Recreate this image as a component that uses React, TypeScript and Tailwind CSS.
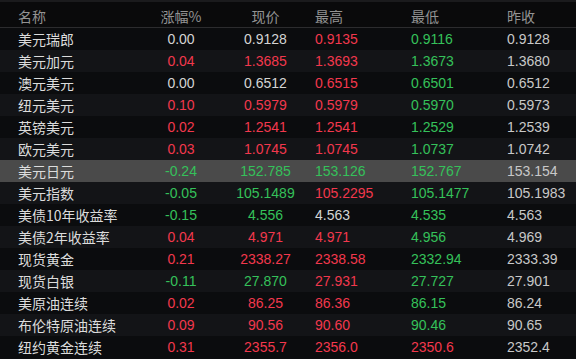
const R = "text-[#f2384d]";
const G = "text-[#35c15a]";
const W = "text-[#d4d4d4]";

type Row = {
  name: string;
  cells: [string, string][];
  last: string;
};

const rows: Row[] = [
  { name: "美元瑞郎", cells: [["0.00", W], ["0.9128", W], ["0.9135", R], ["0.9116", G]], last: "0.9128" },
  { name: "美元加元", cells: [["0.04", R], ["1.3685", R], ["1.3693", R], ["1.3673", G]], last: "1.3680" },
  { name: "澳元美元", cells: [["0.00", W], ["0.6512", W], ["0.6515", R], ["0.6501", G]], last: "0.6512" },
  { name: "纽元美元", cells: [["0.10", R], ["0.5979", R], ["0.5979", R], ["0.5970", G]], last: "0.5973" },
  { name: "英镑美元", cells: [["0.02", R], ["1.2541", R], ["1.2541", R], ["1.2529", G]], last: "1.2539" },
  { name: "欧元美元", cells: [["0.03", R], ["1.0745", R], ["1.0745", R], ["1.0737", G]], last: "1.0742" },
  { name: "美元日元", cells: [["-0.24", G], ["152.785", G], ["153.126", G], ["152.767", G]], last: "153.154" },
  { name: "美元指数", cells: [["-0.05", G], ["105.1489", G], ["105.2295", R], ["105.1477", G]], last: "105.1983" },
  { name: "美债10年收益率", cells: [["-0.15", G], ["4.556", G], ["4.563", W], ["4.535", G]], last: "4.563" },
  { name: "美债2年收益率", cells: [["0.04", R], ["4.971", R], ["4.971", R], ["4.956", G]], last: "4.969" },
  { name: "现货黄金", cells: [["0.21", R], ["2338.27", R], ["2338.58", R], ["2332.94", G]], last: "2333.39" },
  { name: "现货白银", cells: [["-0.11", G], ["27.870", G], ["27.931", R], ["27.727", G]], last: "27.901" },
  { name: "美原油连续", cells: [["0.02", R], ["86.25", R], ["86.36", R], ["86.15", G]], last: "86.24" },
  { name: "布伦特原油连续", cells: [["0.09", R], ["90.56", R], ["90.60", R], ["90.46", G]], last: "90.65" },
  { name: "纽约黄金连续", cells: [["0.31", R], ["2355.7", R], ["2356.0", R], ["2350.6", R]], last: "2352.4" },
];

const grid = "grid grid-cols-[146px_70px_99px_96px_96px_1fr] items-center";
const cjk = "font-['Noto_Sans_CJK_SC',sans-serif]";
const num = "font-['Liberation_Sans','Noto_Sans_CJK_SC',sans-serif]";

export default function App() {
  return (
    <div className="w-[576px] h-[359px] overflow-hidden bg-[#0c0d0f] text-[14px] leading-none">
      <div className="h-[2px] bg-[#1b1b1d]" />
      <div className={`${grid} h-[26px] pt-[2px] bg-[#0a0a0b] border-b border-[#2c2c2e] text-[#939393] ${cjk}`}>
        <span className="pl-[18px]">名称</span>
        <span className="text-center">涨幅%</span>
        <span className="text-center">现价</span>
        <span>最高</span>
        <span>最低</span>
        <span>昨收</span>
      </div>
      {rows.map((r, i) => {
        const hl = i === 6;
        const bg = hl ? "bg-[#4a4a4a]" : i % 2 === 0 ? "bg-[#0b0c0e]" : "bg-[#131417]";
        return (
          <div key={r.name} className={`${grid} h-[22px] ${bg}`}>
            <span className={`pl-[18px] text-[#dcdcdc] ${cjk}`}>{r.name}</span>
            <span className={`text-center ${num} ${r.cells[0][1]}`}>{r.cells[0][0]}</span>
            <span className={`text-center ${num} ${r.cells[1][1]}`}>{r.cells[1][0]}</span>
            <span className={`${num} ${r.cells[2][1]}`}>{r.cells[2][0]}</span>
            <span className={`${num} ${r.cells[3][1]}`}>{r.cells[3][0]}</span>
            <span className={`${num} text-[#c8c8c8]`}>{r.last}</span>
          </div>
        );
      })}
    </div>
  );
}
